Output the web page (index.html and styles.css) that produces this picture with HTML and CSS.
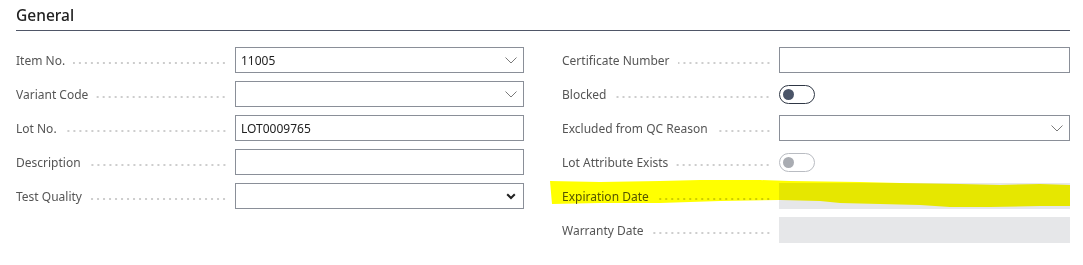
FILE: index.html
```html
<!DOCTYPE html>
<html>
<head>
<meta charset="utf-8">
<link rel="stylesheet" href="styles.css">
</head>
<body>
<div class="page">
  <div class="section-head"><h2 class="section-title">General</h2></div>
  <div class="grid">
    <div class="col">
      <div class="row">
        <div class="label"><span class="label-text">Item No.</span><span class="leader"></span></div>
        <div class="control input">
          <span class="value">11005</span>
          <svg class="chev" width="12" height="7" viewBox="0 0 12 7"><path d="M0.5 0.5 L6 6 L11.5 0.5" fill="none" stroke="#7a7a7a" stroke-width="1"/></svg>
        </div>
      </div>
      <div class="row">
        <div class="label"><span class="label-text">Variant Code</span><span class="leader"></span></div>
        <div class="control input">
          <span class="value"></span>
          <svg class="chev" width="12" height="7" viewBox="0 0 12 7"><path d="M0.5 0.5 L6 6 L11.5 0.5" fill="none" stroke="#7a7a7a" stroke-width="1"/></svg>
        </div>
      </div>
      <div class="row">
        <div class="label"><span class="label-text">Lot No.</span><span class="leader"></span></div>
        <div class="control input"><span class="value">LOT0009765</span></div>
      </div>
      <div class="row">
        <div class="label"><span class="label-text">Description</span><span class="leader"></span></div>
        <div class="control input"><span class="value"></span></div>
      </div>
      <div class="row">
        <div class="label"><span class="label-text">Test Quality</span><span class="leader"></span></div>
        <div class="control input">
          <span class="value"></span>
          <svg class="chev chev-bold" width="10" height="7" viewBox="0 0 10 7"><path d="M1.2 1.2 L5 5 L8.8 1.2" fill="none" stroke="#222" stroke-width="2"/></svg>
        </div>
      </div>
    </div>
    <div class="col col-right">
      <div class="row">
        <div class="label"><span class="label-text">Certificate Number</span><span class="leader"></span></div>
        <div class="control input"><span class="value"></span></div>
      </div>
      <div class="row">
        <div class="label"><span class="label-text">Blocked</span><span class="leader"></span></div>
        <div class="control"><span class="toggle"><span class="knob"></span></span></div>
      </div>
      <div class="row">
        <div class="label"><span class="label-text">Excluded from QC Reason</span><span class="leader"></span></div>
        <div class="control input">
          <span class="value"></span>
          <svg class="chev" width="12" height="7" viewBox="0 0 12 7"><path d="M0.5 0.5 L6 6 L11.5 0.5" fill="none" stroke="#7a7a7a" stroke-width="1"/></svg>
        </div>
      </div>
      <div class="row">
        <div class="label"><span class="label-text">Lot Attribute Exists</span><span class="leader"></span></div>
        <div class="control"><span class="toggle toggle-disabled"><span class="knob"></span></span></div>
      </div>
      <div class="row">
        <div class="label"><span class="label-text">Expiration Date</span><span class="leader"></span></div>
        <div class="control input input-readonly"></div>
      </div>
      <div class="row">
        <div class="label"><span class="label-text">Warranty Date</span><span class="leader"></span></div>
        <div class="control input input-readonly"></div>
      </div>
    </div>
  </div>
  <svg class="highlight" width="1083" height="265" viewBox="0 0 1083 265">
    <polygon points="550,181 600,182 660,181 700,180 760,180 790,181 860,182 900,183 960,184 1000,185 1040,184 1070,185 1070,206 1040,206 990,207 950,207 920,205 880,204 840,203 820,201 780,200 720,201 660,203 600,203 552,204" fill="#ffff00"/>
  </svg>
</div>
</body>
</html>
```
FILE: styles.css
```css
html, body {
  margin: 0;
  padding: 0;
  background: #ffffff;
}

.page {
  position: relative;
  width: 1083px;
  height: 265px;
  padding: 0 13px 0 16px;
  box-sizing: border-box;
  font-family: "Segoe UI", "Noto Sans", "Open Sans", sans-serif;
  color: #505050;
}

.section-head {
  height: 31px;
  border-bottom: 1px solid #4f5667;
  box-sizing: border-box;
  display: flex;
  align-items: flex-end;
  padding-bottom: 4px;
}

.section-title {
  margin: 0;
  font-size: 15.5px;
  font-weight: 500;
  color: #212121;
  line-height: 22px;
}

.grid {
  display: grid;
  grid-template-columns: 508px 508px;
  column-gap: 38px;
  padding-top: 16px;
}

.col {
  display: flex;
  flex-direction: column;
  row-gap: 8px;
}

.row {
  display: grid;
  grid-template-columns: 219px 289px;
  height: 26px;
  align-items: center;
}

.col-right .row {
  grid-template-columns: 217px 291px;
}

.label {
  display: flex;
  align-items: center;
  padding-right: 8px;
  font-size: 12px;
  color: #555555;
  white-space: nowrap;
  padding-top: 1px;
}

.label-text {
  line-height: 16px;
}

.leader {
  flex: 1;
  height: 2px;
  margin-left: 8px;
  margin-top: 4px;
  background-image: radial-gradient(circle, #cccccc 0.7px, transparent 1px);
  background-size: 6px 2px;
  background-repeat: repeat-x;
  background-position: right center;
}

.control {
  height: 26px;
  display: flex;
  align-items: center;
}

.input {
  border: 1px solid #8a8f98;
  box-sizing: border-box;
  padding: 0 6px 0 5px;
  justify-content: space-between;
  font-size: 12px;
  color: #212121;
}

.input-readonly {
  border: none;
  background: #e6e7e9;
}

.chev {
  display: block;
}

.chev-bold {
  margin-right: 1px;
}

.toggle {
  width: 36px;
  height: 19px;
  border: 1px solid #2f3745;
  border-radius: 10px;
  box-sizing: border-box;
  display: flex;
  align-items: center;
  padding-left: 3px;
}

.knob {
  width: 11px;
  height: 11px;
  border-radius: 50%;
  background: #4a5468;
}

.toggle-disabled {
  border-color: #b9bcc2;
}

.toggle-disabled .knob {
  background: #a9acb2;
}

.highlight {
  position: absolute;
  left: 0;
  top: 0;
  pointer-events: none;
  mix-blend-mode: multiply;
}
```
